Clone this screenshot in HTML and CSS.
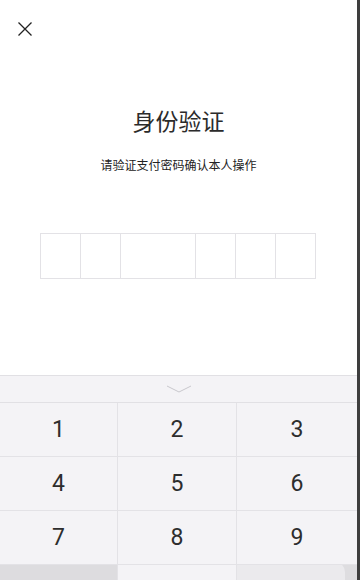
FILE: index.html
```html
<!DOCTYPE html>
<html lang="zh-CN">
<head>
    <meta charset="UTF-8">
    <meta name="viewport" content="width=device-width, initial-scale=1.0">
    <title>身份验证</title>
    <link rel="stylesheet" href="styles.css">
</head>
<body>
    <div class="app">
        <div class="top">
            <div class="close">
                <svg width="14" height="14" viewBox="0 0 14 14">
                    <path d="M0.5 0.5 L13.5 13.5 M13.5 0.5 L0.5 13.5" stroke="#222" stroke-width="1.3" fill="none"/>
                </svg>
            </div>
            <h1 class="title">身份验证</h1>
            <p class="subtitle">请验证支付密码确认本人操作</p>
            <div class="pin">
                <div class="cell"></div>
                <div class="cell"></div>
                <div class="cell wide"></div>
                <div class="cell"></div>
                <div class="cell"></div>
                <div class="cell"></div>
            </div>
        </div>
        <div class="keyboard">
            <div class="hide-bar">
                <svg width="26" height="8" viewBox="0 0 26 8">
                    <path d="M1 1 L13 7 L25 1" stroke="#c9c8cd" stroke-width="1" fill="none"/>
                </svg>
            </div>
            <div class="keys">
                <div class="key">1</div>
                <div class="key">2</div>
                <div class="key">3</div>
                <div class="key">4</div>
                <div class="key">5</div>
                <div class="key">6</div>
                <div class="key">7</div>
                <div class="key">8</div>
                <div class="key">9</div>
                <div class="key dark"></div>
                <div class="key"></div>
                <div class="key del"><span class="blob"></span></div>
            </div>
        </div>
    </div>
</body>
</html>
```

FILE: styles.css
```css
html, body {
    margin: 0;
    padding: 0;
    height: 100%;
    overflow: hidden;
}
body {
    font-family: "Noto Sans CJK SC", "Noto Sans", sans-serif;
    background: #3e3e3e;
}
.app {
    width: 357px;
    height: 580px;
    background: #fff;
    display: flex;
    flex-direction: column;
    border-right: 3px solid #3e3e3e;
    overflow: hidden;
}
.top {
    height: 375px;
    flex-shrink: 0;
    display: flex;
    flex-direction: column;
    align-items: center;
}
.close {
    align-self: flex-start;
    margin: 22px 0 0 18px;
    height: 14px;
}
.close svg {
    display: block;
}
.title {
    margin: 69px 0 0 0;
    font-size: 23px;
    line-height: 30px;
    font-weight: normal;
    color: #2b2b2b;
}
.subtitle {
    margin: 21px 0 0 0;
    font-size: 12px;
    line-height: 18px;
    color: #222;
}
.pin {
    display: flex;
    margin: 59px 0 0 -2px;
    border: 1px solid #e3e2e6;
    height: 44px;
}
.cell {
    width: 39px;
    border-right: 1px solid #e3e2e6;
}
.cell.wide {
    width: 74px;
}
.cell:last-child {
    border-right: none;
}
.keyboard {
    flex: 1;
    min-height: 0;
    overflow: hidden;
    background: #f4f3f6;
    border-top: 1px solid #e1e0e4;
    display: flex;
    flex-direction: column;
}
.hide-bar {
    height: 26px;
    flex-shrink: 0;
    display: flex;
    justify-content: center;
    align-items: center;
    border-bottom: 1px solid #e1e0e4;
}
.hide-bar svg {
    display: block;
    margin-top: -1px;
}
.keys {
    display: grid;
    grid-template-columns: 118px 119px 120px;
    grid-auto-rows: 53px;
    gap: 1px 0;
    background: #e3e2e6;
}
.key {
    background: #f4f3f6;
    display: flex;
    justify-content: center;
    align-items: center;
    font-family: Roboto, "Noto Sans", sans-serif;
    font-size: 23px;
    color: #2d2d2d;
    border-right: 1px solid #e3e2e6;
}
.key:nth-child(3n) {
    border-right: none;
}
.key.dark {
    background: #dddcdf;
}
.key.del {
    background: #dedde0;
    position: relative;
    overflow: hidden;
}
.blob {
    position: absolute;
    left: -8px;
    top: -3px;
    width: 116px;
    height: 40px;
    border-radius: 10px;
    background: #ebeaed;
}
```
